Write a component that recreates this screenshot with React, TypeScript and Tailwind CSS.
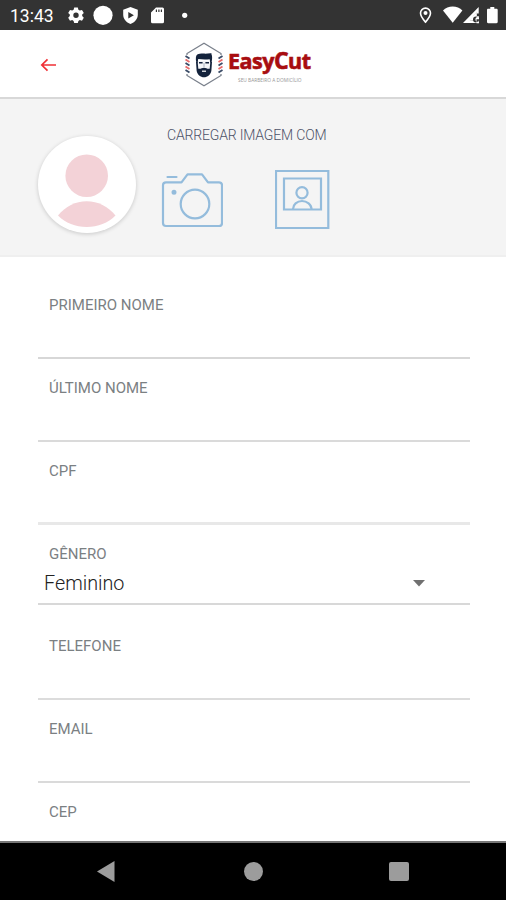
import React from 'react';

interface Field {
  label: string;
  // outer box: total height, label offset and underline style
  className: string;
  lineClass: string;
  value?: string;
}

const fields: Field[] = [
  { label: 'PRIMEIRO NOME', className: 'h-[102px] pt-[38px]', lineClass: 'h-[2px] bg-[#d7d7d7]' },
  { label: 'ÚLTIMO NOME', className: 'h-[83px] pt-[19px]', lineClass: 'h-[2px] bg-[#dadada]' },
  { label: 'CPF', className: 'h-[83px] pt-[19px]', lineClass: 'h-[3px] bg-[#e8e8e8]' },
  { label: 'GÊNERO', className: 'h-[80px] pt-[19px]', lineClass: 'h-[2px] bg-[#d8d8d8]', value: 'Feminino' },
  { label: 'TELEFONE', className: 'h-[95px] pt-[31px]', lineClass: 'h-[2px] bg-[#dcdcdc]' },
  { label: 'EMAIL', className: 'h-[83px] pt-[19px]', lineClass: 'h-[2px] bg-[#dadada]' },
];

const StatusBar: React.FC = () => (
  <div className="flex h-[30px] shrink-0 items-center bg-[#333333] text-white">
    <span className="ml-[10px] w-[58px] pt-[3px] text-[17.5px] leading-none">13:43</span>
    <svg className="h-[30px] w-[125px]" viewBox="68 0 125 30" fill="#fff">
      <path
        fillRule="evenodd"
        d="M74.2 7.5h3.6l.6 2.2 1.4.8 2.2-.6 1.8 3-1.6 1.7v1.4l1.6 1.7-1.8 3-2.2-.6-1.4.8-.6 2.2h-3.6l-.6-2.2-1.4-.8-2.2.6-1.8-3 1.6-1.7v-1.4l-1.6-1.7 1.8-3 2.2.6 1.4-.8zM76 12.600a2.700 2.700 0 1 0 0 5.400 2.700 2.700 0 0 0 0-5.400z"
      />
      <circle cx="103" cy="15.300" r="9.600" />
      <path
        fillRule="evenodd"
        d="M130.500 7l7.300 2.700v5c0 4.200-3 7.500-7.300 9.300-4.300-1.800-7.300-5.100-7.300-9.300v-5zM128.300 12v6.600l5.600-3.300z"
      />
      <path
        fillRule="evenodd"
        d="M156 7.500h6.500a1.500 1.500 0 0 1 1.500 1.500v12.800a1.500 1.500 0 0 1-1.500 1.500h-10a1.500 1.500 0 0 1-1.500-1.500V12.500zM155.800 9.500v2.500h1.200V9.500zM158.300 9.500v2.500h1.200V9.500zM160.800 9.500v2.500h1.200V9.500z"
      />
      <circle cx="184.700" cy="15.300" r="2.600" />
    </svg>
    <svg className="ml-auto h-[30px] w-[92px]" viewBox="414 0 92 30" fill="#fff">
      <path
        d="M425.500 8.100a5 5 0 0 0-5 5c0 3.500 5 9 5 9s5-5.500 5-9a5 5 0 0 0-5-5z"
        fill="none"
        stroke="#fff"
        strokeWidth="1.600"
      />
      <circle cx="425.500" cy="12.900" r="2" />
      <path d="M443 10.500c2.500-2.500 6-3.900 9.700-3.900s7.200 1.400 9.700 3.900l-9.700 12.300z" />
      <path
        fillRule="evenodd"
        d="M478.700 7v6.500h-2V12l-7 8.800h3.600c.2-3 2-4.800 5.400-4.800v7H463z"
      />
      <path d="M476.800 11.500v5l-4.300 4.300h-3.500z" />
      <circle cx="476" cy="19.500" r="3" fill="#333" />
      <path d="M479 17.300a2.400 2.400 0 1 0 0 4.200v1.700h-2.500v-4h2.500z" />
      <path d="M490.300 7h4v1.800h2.200c.7 0 1.200.5 1.200 1.200v12c0 .7-.5 1.200-1.200 1.200h-8.300c-.7 0-1.200-.5-1.200-1.200V10c0-.7.5-1.200 1.200-1.200h2.100z" />
    </svg>
  </div>
);

const Logo: React.FC = () => (
  <svg className="h-[50px] w-[132px]" viewBox="182 40 132 50">
    <path d="M187 55v-1.500L204 43.300l17 10.200V55M187 74v1.500l17 10.200 17-10.200V74" fill="none" stroke="#7a818c" strokeWidth="1.300" />
    {/* Barber pole stripes */}
    <path d="M185.500 56l4 2.500M185.500 63l4 2.500M185.500 70l4 2.500M218.500 58.500l4-2.500M218.500 65.500l4-2.500M218.500 72.500l4-2.500" stroke="#3a4b66" strokeWidth="1.800" />
    <path d="M185.500 59.500l4 2.500M185.500 66.500l4 2.500M218.500 62l4-2.500M218.500 69l4-2.500" stroke="#e86a6a" strokeWidth="1.800" />
    {/* Barber head */}
    <path d="M197 61h14.200v8l-3 6.500h-8.200l-3-6.500z" fill="#f4f5f7" />
    <path
      d="M196.300 62.500c-.9-4.500-.5-7.300 1.400-8.200 2-1 4-1 6-.7 3 .4 5-.6 7.800-.3-.2.900.2 1.400.4 2.300.4 2 .2 4.500-.3 6.900h-1.400l-.5-3.300c-4 .5-8 .3-11.500-.2l-.5 3.500z"
      fill="#14233c"
    />
    <path
      d="M196 62h1.700l.6 6.700c2.500.7 3.300-1 5.700-1s3.200 1.700 5.700 1l.6-6.700h1.700l-.6 8.500c-.5 4-4 6.800-7.400 6.800s-6.900-2.800-7.400-6.800z"
      fill="#14233c"
    />
    <path d="M199 62.700h3.600M205.400 62.700h3.600" stroke="#14233c" strokeWidth="1.500" />
    <path d="M204 63v4" stroke="#a3abb8" strokeWidth=".9" />
    <path d="M202 71.200h4" stroke="#fff" strokeWidth="1.200" />
    <text
      x="228"
      y="69"
      textLength="82.500"
      lengthAdjust="spacingAndGlyphs"
      fill="#a80d10"
      stroke="#a80d10"
      strokeWidth=".6"
      className="font-['Open_Sans'] text-[21px] font-bold tracking-[-0.500px]"
    >
      Easy<tspan className="text-[22.500px]">C</tspan>ut
    </text>
    <text
      x="238"
      y="81.800"
      textLength="63.500"
      lengthAdjust="spacingAndGlyphs"
      fill="#969696"
      className="font-['Open_Sans'] text-[5.500px]"
    >
      SEU BARBEIRO A DOMICÍLIO
    </text>
  </svg>
);

const Header: React.FC = () => (
  <div className="flex h-[69px] shrink-0 items-center border-b-2 border-[#d8d8d8] bg-white">
    <button className="ml-[40px] mt-[3px] h-[16px] w-[17px]" aria-label="Voltar">
      <svg className="h-[16px] w-[17px]" viewBox="0 0 17 16" fill="none" stroke="#f03036" strokeWidth="1.700">
        <path d="M16 8H2M7.500 2.300L1.800 8l5.700 5.700" />
      </svg>
    </button>
    <div className="ml-[125px] mt-[3px]">
      <Logo />
    </div>
  </div>
);

const PhotoSection: React.FC = () => (
  <div className="flex h-[158px] shrink-0 border-b-2 border-[#efefef] bg-[#f4f4f4]">
    <div className="ml-[38px] mt-[37px] h-[97px] w-[98px] rounded-full bg-white shadow-[0_1px_4px_rgba(0,0,0,0.18)]">
      <svg className="h-[97px] w-[98px]" viewBox="38 136 98 97" fill="#f3d2d7">
        <circle cx="86.700" cy="175.700" r="21.300" />
        <path d="M58 215.500c7.500-9 17.500-14.200 28.700-14.200s21.300 5.200 28.800 14.200c-7.500 7.500-17.500 11.500-28.800 11.500S65.500 223 58 215.500z" />
      </svg>
    </div>
    <div className="ml-[25px] mt-[28px]">
      <p className="ml-[6px] whitespace-nowrap text-[14px] leading-[17px] font-light tracking-[-0.170px] text-[#4d5268]">
        CARREGAR IMAGEM COM
      </p>
      <div className="mt-[26px] flex gap-[52px]">
        <svg className="h-[60px] w-[62px]" viewBox="161 170 62 60" fill="none" stroke="#94bcdc" strokeWidth="2.200" strokeLinecap="round" strokeLinejoin="round">
          <path d="M167.500 177h9M166 182.300h15.500l6-8h14.500l6 8h11c1.800 0 3 1.200 3 3V223c0 1.800-1.200 3-3 3H166c-1.800 0-3-1.200-3-3v-37.700c0-1.800 1.200-3 3-3z" />
          <circle cx="195" cy="204" r="14.300" />
          <circle cx="174" cy="192.200" r="1.400" fill="#94bcdc" />
        </svg>
        <svg className="h-[60px] w-[55px]" viewBox="275 170 55 60" fill="none" stroke="#94bcdc" strokeWidth="2.200">
          <path d="M276 171h52.300v57H276z" />
          <path d="M284 178.500h37v31h-37z" />
          <circle cx="302" cy="192.700" r="5.600" />
          <path d="M293 209c0-4.500 4-8 9-8s9.500 3.500 9.500 8" />
        </svg>
      </div>
    </div>
  </div>
);

const FormField: React.FC<{ field: Field }> = ({ field }) => (
  <div className={`flex flex-col ${field.className}`}>
    <label className="ml-[11px] text-[15px] leading-[20px] text-[#7b8083]">{field.label}</label>
    {field.value && (
      <div className="mt-[8px] ml-[6px] flex items-center justify-between pr-[44px] text-[19.800px] leading-[24px] font-light text-[#222]">
        <span>{field.value}</span>
        <svg className="h-[8px] w-[14px]" viewBox="0 0 14 8" fill="#707070">
          <path d="M1 0h12L7 6.400z" />
        </svg>
      </div>
    )}
    <div className={`mt-auto shrink-0 ${field.lineClass}`} />
  </div>
);

const NavigationBar: React.FC = () => (
  <div className="flex h-[59px] shrink-0 items-center border-t-2 border-[#777] bg-black text-[#9c9c9c]">
    <svg className="ml-[96px] h-[22px] w-[19px]" viewBox="0 0 19 22" fill="currentColor">
      <path d="M1 10.500L18.500 0v21z" />
    </svg>
    <div className="ml-[129px] h-[19px] w-[19px] rounded-full bg-current" />
    <div className="ml-[126px] h-[19px] w-[20px] rounded-[2px] bg-current" />
  </div>
);

export default function App() {
  return (
    <div className="flex h-[900px] w-[506px] flex-col overflow-hidden bg-white font-[Roboto,sans-serif]">
      <StatusBar />
      <Header />
      <PhotoSection />
      <div className="min-h-0 flex-1 overflow-hidden pr-[36px] pl-[38px]">
        {fields.map((field) => (
          <FormField key={field.label} field={field} />
        ))}
        <label className="mt-[19px] ml-[11px] block text-[15px] leading-[20px] text-[#7b8083]">CEP</label>
      </div>
      <NavigationBar />
    </div>
  );
}
